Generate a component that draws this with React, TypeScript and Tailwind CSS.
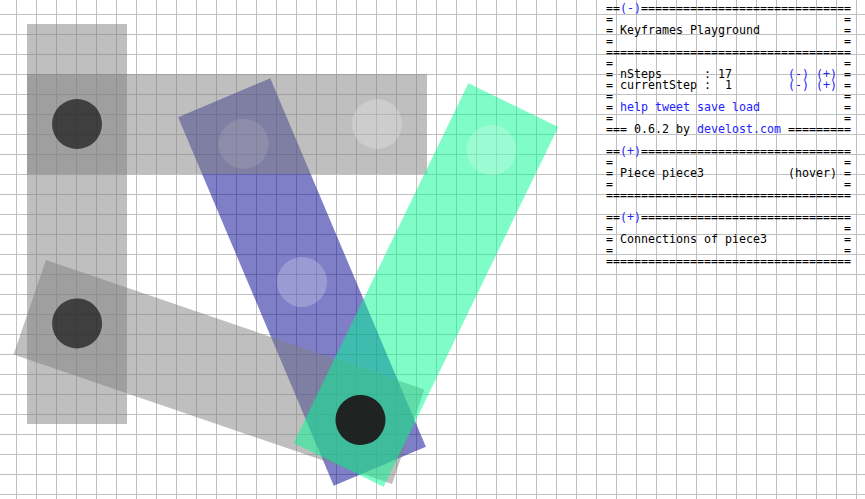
import React from 'react';

type Dot = { pos: number; kind: 'light' | 'dark' | 'joint' };

interface Piece {
  name: string;
  className: string;
  dots: Dot[];
  horizontal?: boolean;
}

// pieces of the playground, drawn in z-order
const pieces: Piece[] = [
  {
    name: 'piece0',
    className: 'left-[27px] top-[24px] w-[100px] h-[400px] bg-[rgba(128,128,128,0.5)]',
    dots: [],
  },
  {
    name: 'piece3',
    className:
      'left-[251.5px] top-[81.5px] w-[100px] h-[400px] rotate-[-22.9deg] bg-[rgba(0,0,145,0.5)]',
    dots: [
      { pos: 50, kind: 'light' },
      { pos: 200, kind: 'light' },
    ],
  },
  {
    name: 'piece1',
    className: 'left-[27px] top-[74px] w-[400px] h-[100px] bg-[rgba(128,128,128,0.5)]',
    dots: [
      { pos: 50, kind: 'dark' },
      { pos: 350, kind: 'light' },
    ],
    horizontal: true,
  },
  {
    name: 'piece2',
    className:
      'left-[18.5px] top-[321.5px] w-[400px] h-[100px] rotate-[18.9deg] bg-[rgba(128,128,128,0.5)]',
    dots: [{ pos: 50, kind: 'dark' }],
    horizontal: true,
  },
  {
    name: 'piece4',
    className:
      'left-[375.5px] top-[85px] w-[100px] h-[400px] rotate-[25.9deg] bg-[rgba(0,250,145,0.5)]',
    dots: [
      { pos: 50, kind: 'light' },
      { pos: 350, kind: 'joint' },
    ],
  },
];

const dotColor = {
  light: 'bg-[rgba(255,255,255,0.22)]',
  dark: 'bg-[rgba(0,0,0,0.6)]',
  joint: 'bg-[rgba(30,30,30,0.97)]',
};

const PieceView = ({ piece }: { piece: Piece }) => (
  <div className={`absolute ${piece.className}`}>
    {piece.dots.map((d, i) => (
      <div
        key={i}
        className={`absolute w-[50px] h-[50px] rounded-full ${dotColor[d.kind]}`}
        style={piece.horizontal ? { left: d.pos - 25, top: 25 } : { left: 25, top: d.pos - 25 }}
      />
    ))}
  </div>
);

const Link = ({ children }: { children: React.ReactNode }) => (
  <span className="text-[#2323ff] cursor-pointer">{children}</span>
);

const Line = ({ children }: { children?: React.ReactNode }) => (
  <div className="h-[11px] whitespace-pre">{children}</div>
);

const EQ = '==============================';

const App = () => {
  return (
    <div className="relative w-[865px] h-[499px] overflow-hidden bg-white bg-[linear-gradient(to_right,#c0c0c0_1px,transparent_1px),linear-gradient(to_bottom,#c0c0c0_1px,transparent_1px)] bg-size-[20px_20px] bg-position-[16px_14px]">
      {pieces.map((p) => (
        <PieceView key={p.name} piece={p} />
      ))}

      <div className="absolute left-[606px] top-[3px] font-['DejaVu_Sans_Mono',monospace] text-[11.63px] leading-[11px] text-black">
        <Line>
          ==<Link>(-)</Link>
          {EQ}
        </Line>
        <Line>{'=                                 ='}</Line>
        <Line>{'= Keyframes Playground            ='}</Line>
        <Line>{'=                                 ='}</Line>
        <Line>{'==================================='}</Line>
        <Line>{'=                                 ='}</Line>
        <Line>
          {'= nSteps      : 17        '}
          <Link>(-)</Link> <Link>(+)</Link>
          {' ='}
        </Line>
        <Line>
          {'= currentStep :  1        '}
          <Link>(-)</Link> <Link>(+)</Link>
          {' ='}
        </Line>
        <Line>{'=                                 ='}</Line>
        <Line>
          {'= '}
          <Link>help</Link> <Link>tweet</Link> <Link>save</Link> <Link>load</Link>
          {'            ='}
        </Line>
        <Line>{'=                                 ='}</Line>
        <Line>
          {'=== 0.6.2 by '}
          <Link>develost.com</Link>
          {' ========='}
        </Line>
        <Line />
        <Line>
          ==<Link>(+)</Link>
          {EQ}
        </Line>
        <Line>{'=                                 ='}</Line>
        <Line>{'= Piece piece3            (hover) ='}</Line>
        <Line>{'=                                 ='}</Line>
        <Line>{'==================================='}</Line>
        <Line />
        <Line>
          ==<Link>(+)</Link>
          {EQ}
        </Line>
        <Line>{'=                                 ='}</Line>
        <Line>{'= Connections of piece3           ='}</Line>
        <Line>{'=                                 ='}</Line>
        <Line>{'==================================='}</Line>
      </div>
    </div>
  );
};

export default App;
